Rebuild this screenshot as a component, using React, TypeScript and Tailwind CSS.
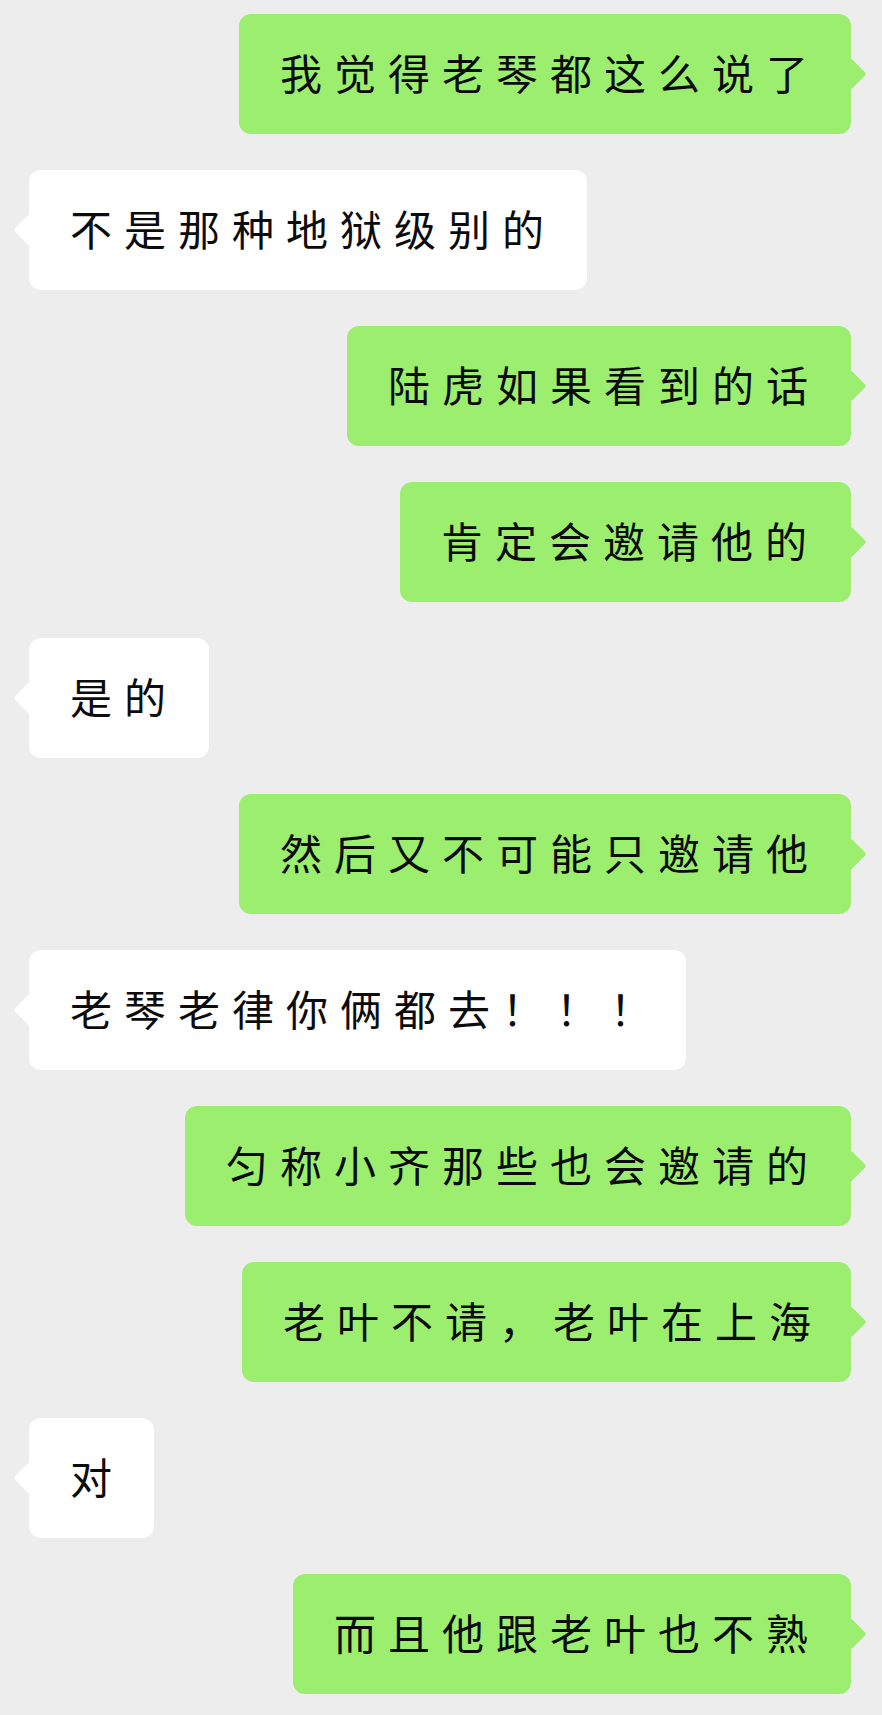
const messages = [
  { text: "我觉得老琴都这么说了", mine: true, width: "w-[612px]" },
  { text: "不是那种地狱级别的", mine: false, width: "w-[558px]" },
  { text: "陆虎如果看到的话", mine: true, width: "w-[504px]" },
  { text: "肯定会邀请他的", mine: true, width: "w-[451px]" },
  { text: "是的", mine: false, width: "w-[180px]" },
  { text: "然后又不可能只邀请他", mine: true, width: "w-[612px]" },
  { text: "老琴老律你俩都去\uFF01\uFF01\uFF01", mine: false, width: "w-[657px]" },
  { text: "匀称小齐那些也会邀请的", mine: true, width: "w-[666px]" },
  { text: "老叶不请\uFF0C老叶在上海", mine: true, width: "w-[609px]" },
  { text: "对", mine: false, width: "w-[125px]" },
  { text: "而且他跟老叶也不熟", mine: true, width: "w-[558px]" },
];

function Bubble({ text, mine, width }: { text: string; mine: boolean; width: string }) {
  return (
    <div
      className={`relative flex h-[120px] items-center rounded-[12px] pb-[4px] pl-[41px] text-[42px] leading-none font-normal tracking-[12px] whitespace-nowrap text-[#0c0c0c] ${width} ${
        mine ? "self-end bg-[#9cee6e]" : "self-start bg-white"
      }`}
    >
      {mine ? (
        <span className="absolute top-[49px] right-[-11px] size-[22px] rotate-45 rounded-[2px] bg-[#9cee6e]" />
      ) : (
        <span className="absolute top-[49px] left-[-11px] size-[22px] rotate-45 rounded-[2px] bg-white" />
      )}
      <span className="relative">{text}</span>
    </div>
  );
}

export default function App() {
  return (
    <div className="flex min-h-[1715px] flex-col gap-[36px] bg-[#ededed] pt-[14px] pr-[31px] pl-[29px] font-['Noto_Sans_CJK_SC','Noto_Sans',sans-serif]">
      {messages.map((m) => (
        <Bubble key={m.text} text={m.text} mine={m.mine} width={m.width} />
      ))}
    </div>
  );
}
